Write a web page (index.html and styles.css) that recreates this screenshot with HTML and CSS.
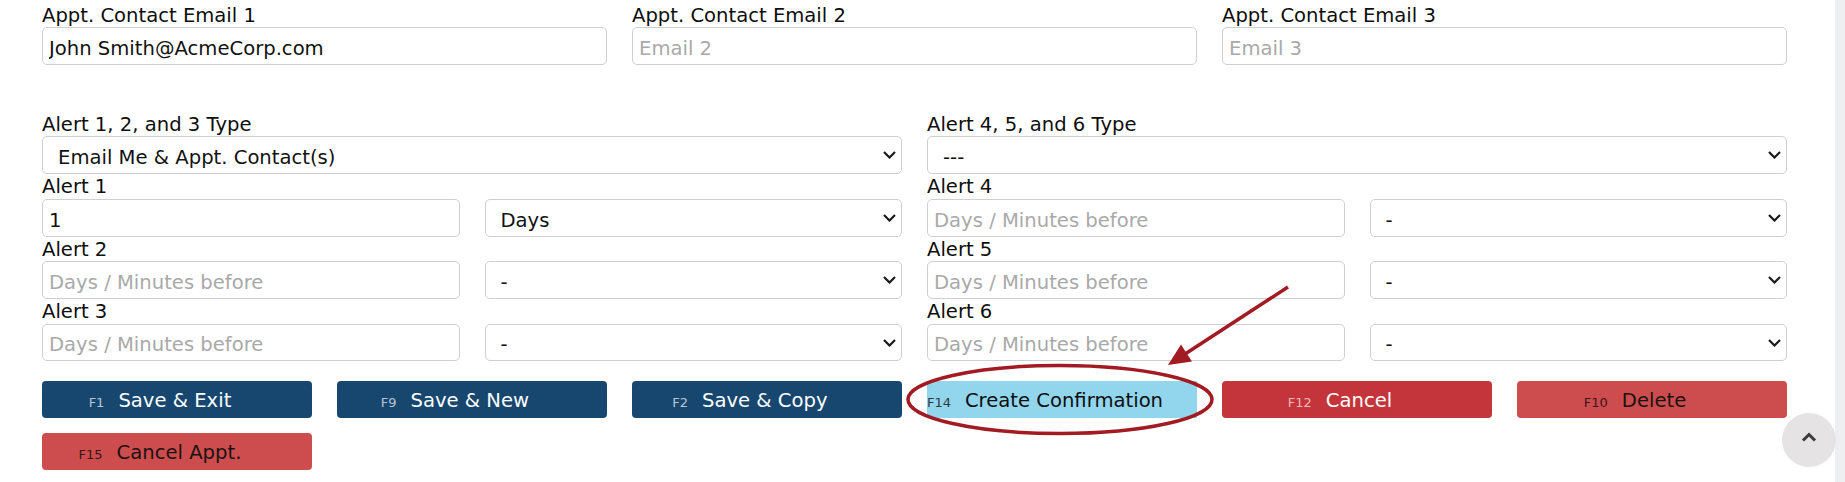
FILE: index.html
```html
<!DOCTYPE html>
<html lang="en">
<head>
<meta charset="utf-8">
<title>Appointment</title>
<link rel="stylesheet" href="styles.css">
</head>
<body>
<div class="page">
  <div class="grid3 emails">
    <div class="field">
      <label class="lbl">Appt. Contact Email 1</label>
      <input class="inp" type="text" value="John Smith@AcmeCorp.com">
    </div>
    <div class="field">
      <label class="lbl">Appt. Contact Email 2</label>
      <input class="inp" type="text" placeholder="Email 2">
    </div>
    <div class="field">
      <label class="lbl">Appt. Contact Email 3</label>
      <input class="inp" type="text" placeholder="Email 3">
    </div>
  </div>

  <div class="grid2 alerts">
    <div class="col">
      <div class="field">
        <label class="lbl">Alert 1, 2, and 3 Type</label>
        <div class="sel-wrap">
          <select class="sel"><option>Email Me &amp; Appt. Contact(s)</option></select>
          <svg class="chev" viewBox="0 0 13 8" width="13" height="8"><path d="M1 1 L6.5 6.5 L12 1" /></svg>
        </div>
      </div>
      <div class="field">
        <label class="lbl">Alert 1</label>
        <div class="pair">
          <input class="inp" type="text" value="1">
          <div class="sel-wrap">
            <select class="sel"><option>Days</option></select>
            <svg class="chev" viewBox="0 0 13 8" width="13" height="8"><path d="M1 1 L6.5 6.5 L12 1" /></svg>
          </div>
        </div>
      </div>
      <div class="field">
        <label class="lbl">Alert 2</label>
        <div class="pair">
          <input class="inp" type="text" placeholder="Days / Minutes before">
          <div class="sel-wrap">
            <select class="sel"><option>-</option></select>
            <svg class="chev" viewBox="0 0 13 8" width="13" height="8"><path d="M1 1 L6.5 6.5 L12 1" /></svg>
          </div>
        </div>
      </div>
      <div class="field">
        <label class="lbl">Alert 3</label>
        <div class="pair">
          <input class="inp" type="text" placeholder="Days / Minutes before">
          <div class="sel-wrap">
            <select class="sel"><option>-</option></select>
            <svg class="chev" viewBox="0 0 13 8" width="13" height="8"><path d="M1 1 L6.5 6.5 L12 1" /></svg>
          </div>
        </div>
      </div>
    </div>

    <div class="col">
      <div class="field">
        <label class="lbl">Alert 4, 5, and 6 Type</label>
        <div class="sel-wrap">
          <select class="sel"><option>---</option></select>
          <svg class="chev" viewBox="0 0 13 8" width="13" height="8"><path d="M1 1 L6.5 6.5 L12 1" /></svg>
        </div>
      </div>
      <div class="field">
        <label class="lbl">Alert 4</label>
        <div class="pair">
          <input class="inp" type="text" placeholder="Days / Minutes before">
          <div class="sel-wrap">
            <select class="sel"><option>-</option></select>
            <svg class="chev" viewBox="0 0 13 8" width="13" height="8"><path d="M1 1 L6.5 6.5 L12 1" /></svg>
          </div>
        </div>
      </div>
      <div class="field">
        <label class="lbl">Alert 5</label>
        <div class="pair">
          <input class="inp" type="text" placeholder="Days / Minutes before">
          <div class="sel-wrap">
            <select class="sel"><option>-</option></select>
            <svg class="chev" viewBox="0 0 13 8" width="13" height="8"><path d="M1 1 L6.5 6.5 L12 1" /></svg>
          </div>
        </div>
      </div>
      <div class="field">
        <label class="lbl">Alert 6</label>
        <div class="pair">
          <input class="inp" type="text" placeholder="Days / Minutes before">
          <div class="sel-wrap">
            <select class="sel"><option>-</option></select>
            <svg class="chev" viewBox="0 0 13 8" width="13" height="8"><path d="M1 1 L6.5 6.5 L12 1" /></svg>
          </div>
        </div>
      </div>
    </div>
  </div>

  <div class="buttons">
    <button class="btn btn-navy"><span class="key">F1</span>Save &amp; Exit</button>
    <button class="btn btn-navy"><span class="key">F9</span>Save &amp; New</button>
    <button class="btn btn-navy"><span class="key">F2</span>Save &amp; Copy</button>
    <button class="btn btn-light"><span class="key">F14</span>Create Confirmation</button>
    <button class="btn btn-red"><span class="key">F12</span>Cancel</button>
    <button class="btn btn-pale"><span class="key">F10</span>Delete</button>
    <button class="btn btn-pale"><span class="key">F15</span>Cancel Appt.</button>
  </div>
</div>

<svg class="annot" width="1845" height="482" viewBox="0 0 1845 482">
  <ellipse cx="1060" cy="399.5" rx="152" ry="34" />
  <line x1="1288" y1="287" x2="1182" y2="356" />
  <polygon points="1168,365 1181,344.6 1192,361.4" />
</svg>

<div class="scrollbar"></div>
<button class="to-top" aria-label="Back to top">
  <svg viewBox="0 0 16 10" width="16" height="10"><path d="M2 8.5 L8 2.5 L14 8.5" /></svg>
</button>
</body>
</html>
```

FILE: styles.css
```css
html, body {
  margin: 0;
  padding: 0;
  background: #ffffff;
}

body {
  font-family: "DejaVu Sans", Verdana, sans-serif;
  font-size: 19.6px;
  color: #111111;
  overflow: hidden;
  width: 1845px;
  height: 482px;
  position: relative;
}

.page {
  width: 1745px;
  padding: 2.5px 0 0 42px;
}

.grid3 {
  display: grid;
  grid-template-columns: repeat(3, 1fr);
  column-gap: 25px;
}

.grid2 {
  display: grid;
  grid-template-columns: repeat(2, 1fr);
  column-gap: 25px;
}

.emails {
  margin-bottom: 47px;
}

.field {
  display: flex;
  flex-direction: column;
}

.lbl {
  display: block;
  box-sizing: border-box;
  height: 24.6px;
  padding-top: 2px;
  line-height: 22.6px;
  color: #0e0e0e;
  white-space: nowrap;
}

.pair {
  display: grid;
  grid-template-columns: 1fr 1fr;
  column-gap: 25px;
}

.inp,
.sel {
  box-sizing: border-box;
  width: 100%;
  height: 37.8px;
  margin: 0;
  border: 1px solid #cfcfcf;
  border-radius: 5px;
  background: #ffffff;
  font-family: inherit;
  font-size: 19.6px;
  color: #111111;
  outline: none;
}

.inp {
  padding: 4.5px 6px 0 6px;
}

.inp::placeholder {
  color: #a9a9a9;
  opacity: 1;
}

.sel-wrap {
  position: relative;
}

.sel {
  -webkit-appearance: none;
  appearance: none;
  padding: 4.5px 30px 0 15px;
}

.chev {
  position: absolute;
  right: 6.5px;
  top: 15px;
  width: 13px;
  height: 8px;
  pointer-events: none;
}

.chev path {
  fill: none;
  stroke: #1a1a1a;
  stroke-width: 2.2;
}

.buttons {
  display: grid;
  grid-template-columns: repeat(6, 1fr);
  column-gap: 25px;
  row-gap: 15px;
  margin-top: 20px;
}

.btn {
  display: flex;
  align-items: baseline;
  justify-content: center;
  gap: 14px;
  box-sizing: border-box;
  height: 37px;
  margin: 0;
  padding: 1.5px 34px 0 0;
  border: none;
  border-radius: 4px;
  font-family: inherit;
  font-size: 19.6px;
  line-height: 35.5px;
  white-space: nowrap;
  cursor: pointer;
}

.key {
  font-size: 13px;
}

.btn-navy {
  background: #17466f;
  color: #ffffff;
}

.btn-navy .key {
  color: #b7c6d4;
}

.btn-light {
  background: #92d6ee;
  color: #0d0d0d;
  border-radius: 0;
}

.btn-light .key {
  color: #2e3b42;
}

.btn-red {
  background: #c4343b;
  color: #ffffff;
}

.btn-red .key {
  color: #efb9bb;
}

.btn-pale {
  background: #cd4d4f;
  color: #1a1212;
}

.btn-pale .key {
  color: #3a1616;
}

.annot {
  position: absolute;
  left: 0;
  top: 0;
  pointer-events: none;
}

.annot ellipse,
.annot line {
  fill: none;
  stroke: #a21b22;
  stroke-width: 3.5;
}

.annot polygon {
  fill: #a21b22;
  stroke: none;
}

.scrollbar {
  position: absolute;
  right: 0;
  top: 0;
  width: 10px;
  height: 482px;
  background: #eeeff0;
}

.to-top {
  position: absolute;
  right: 9px;
  bottom: 15px;
  width: 54px;
  height: 54px;
  padding: 0;
  border: none;
  border-radius: 50%;
  background: #e5e3e3;
  display: flex;
  align-items: center;
  justify-content: center;
}

.to-top svg {
  margin-top: -6px;
}

.to-top path {
  fill: none;
  stroke: #3b3b3b;
  stroke-width: 3;
}
```
